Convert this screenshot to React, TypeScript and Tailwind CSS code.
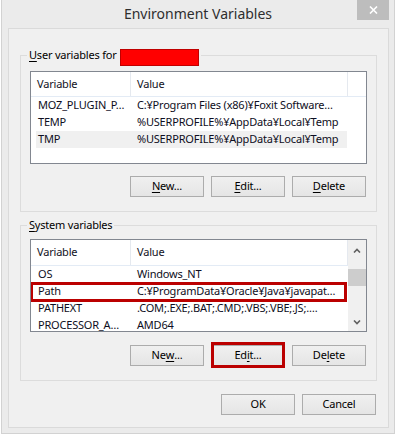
import React from "react";

type Row = { name: string; value: string; hl?: boolean; mark?: boolean };

const userVars: Row[] = [
    { name: "MOZ_PLUGIN_P…", value: "C:¥Program Files (x86)¥Foxit Software…" },
    { name: "TEMP", value: "%USERPROFILE%¥AppData¥Local¥Temp" },
    { name: "TMP", value: "%USERPROFILE%¥AppData¥Local¥Temp", hl: true },
];

const sysVars: Row[] = [
    { name: "OS", value: "Windows_NT" },
    { name: "Path", value: "C:¥ProgramData¥Oracle¥Java¥javapat…", mark: true },
    { name: "PATHEXT", value: ".COM;.EXE;.BAT;.CMD;.VBS;.VBE;.JS;.…" },
    { name: "PROCESSOR_A…", value: "AMD64" },
];

const Btn = ({ children, mark }: { children: React.ReactNode; mark?: boolean }) => (
    <button className="relative w-[74px] h-[21px] border border-[#acacac] bg-gradient-to-b from-[#f0f0f0] to-[#e5e5e5] flex items-center justify-center text-[11px] tracking-[-0.2px] text-black">
        {children}
        {mark && <span className="absolute -top-[4px] -bottom-[3px] -left-[1px] -right-[1px] border-[3px] border-[#bb0000]" />}
    </button>
);

const U = ({ children }: { children: React.ReactNode }) => <span className="underline underline-offset-[2px]">{children}</span>;

function Header({ filler, tall }: { filler: boolean; tall?: boolean }) {
    return (
        <div className={`flex ${tall ? "h-[26px]" : "h-[25px]"} shrink-0 border-b border-[#e3ebf5] text-[11px] tracking-[-0.2px] text-[#111122]`}>
            <div className="w-[100px] border-r border-[#e5e9ef] pl-[6px] flex items-center">Variable</div>
            <div className="w-[217px] border-r border-[#e5e9ef] pl-[6px] flex items-center">Value</div>
            {filler && <div className="flex-1" />}
        </div>
    );
}

function Rows({ rows }: { rows: Row[] }) {
    return (
        <div className="flex flex-col">
            {rows.map((r, i) => (
                <div key={i} className={`relative ml-[5px] w-[311px] h-[17px] shrink-0 flex items-center text-[11px] tracking-[-0.2px] text-[#0e0e22] whitespace-nowrap ${r.hl ? "bg-[#f0f0f0]" : ""}`}>
                    <div className="w-[99px] pl-[2px] overflow-hidden">{r.name}</div>
                    <div className="flex-1 pl-[2px] overflow-hidden">{r.value}</div>
                    {r.mark && <span className="absolute -top-[1px] -bottom-[2px] -left-[6px] right-0 border-[3px] border-[#bb0000]" />}
                </div>
            ))}
        </div>
    );
}

const Chevron = ({ up }: { up?: boolean }) => (
    <svg width="8" height="5" viewBox="0 0 8 5">
        <path d={up ? "M1 4.5 L4 1.5 L7 4.5" : "M1 0.5 L4 3.5 L7 0.5"} fill="none" stroke="#606060" strokeWidth="1.6" />
    </svg>
);

export default function App() {
    return (
        <div className="w-[395px] h-[435px] bg-white font-['Noto_Sans',sans-serif] overflow-hidden">
            <div className="ml-[1px] w-[394px] h-[434px] bg-[#ebebeb] border-x border-b border-[#d2d2d2] flex flex-col">
                <div className="relative h-[28px] shrink-0 flex items-center justify-center text-[14px] text-[#2e2e2e] pb-[1px]">
                    Environment Variables
                    <div className="absolute top-0 right-[5px] w-[32px] h-[20px] bg-[#bdbdbd] flex items-center justify-center">
                        <svg width="9" height="8" viewBox="0 0 9 8">
                            <path d="M1 0.5 L8 7.5 M8 0.5 L1 7.5" stroke="#fff" strokeWidth="1.6" />
                        </svg>
                    </div>
                </div>
                <div className="pl-[6px] pr-[5px]">
                    <div className="h-[400px] border border-[#dadada] bg-[#f0f0f0] flex flex-col">
                        <fieldset className="mt-[18px] ml-[11px] w-[357px] border border-[#dcdcdc]">
                            <legend className="ml-[6px] px-[2px] h-[16px] flex items-center text-[11px] tracking-[-0.2px] text-black">
                                <span><U>U</U>ser variables for</span>
                                <span className="self-start mt-[2px] ml-[3px] w-[79px] h-[17px] bg-[#ff0000] border border-[#c00000]" />
                            </legend>
                            <div className="px-[9px] pb-[14px]">
                                <div className="mt-[8px] h-[93px] border border-[#828790] bg-white overflow-hidden">
                                    <Header filler />
                                    <Rows rows={userVars} />
                                </div>
                                <div className="mt-[12px] pr-[1px] flex justify-end gap-[7px]">
                                    <Btn><U>N</U>ew...</Btn>
                                    <Btn><U>E</U>dit...</Btn>
                                    <Btn><U>D</U>elete</Btn>
                                </div>
                            </div>
                        </fieldset>
                        <fieldset className="mt-[5px] ml-[11px] w-[357px] border border-[#dcdcdc]">
                            <legend className="ml-[6px] px-[2px] h-[16px] flex items-center text-[11px] tracking-[-0.2px] text-black">
                                <span><U>S</U>ystem variables</span>
                            </legend>
                            <div className="px-[9px] pb-[14px]">
                                <div className="mt-[6px] h-[93px] border border-[#828790] bg-white overflow-hidden flex">
                                    <div className="flex-1 flex flex-col overflow-hidden">
                                        <Header filler={false} tall />
                                        <Rows rows={sysVars} />
                                    </div>
                                    <div className="w-[18px] bg-[#f0f0f0] flex flex-col">
                                        <div className="h-[20px] flex items-center justify-center"><Chevron up /></div>
                                        <div className="mt-[9px] h-[17px] bg-[#cdcdcd]" />
                                        <div className="flex-1" />
                                        <div className="h-[17px] flex items-center justify-center"><Chevron /></div>
                                    </div>
                                </div>
                                <div className="mt-[13px] pr-[1px] flex justify-end gap-[7px]">
                                    <Btn>Ne<U>w</U>...</Btn>
                                    <Btn mark>Ed<U>i</U>t...</Btn>
                                    <Btn>De<U>l</U>ete</Btn>
                                </div>
                            </div>
                        </fieldset>
                        <div className="mt-[13px] pr-[12px] flex justify-end gap-[7px]">
                            <Btn>OK</Btn>
                            <Btn>Cancel</Btn>
                        </div>
                    </div>
                </div>
            </div>
        </div>
    );
}
